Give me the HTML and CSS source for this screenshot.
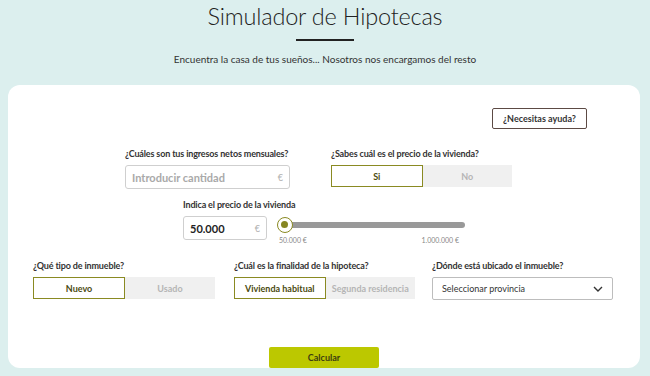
FILE: index.html
```html
<!DOCTYPE html>
<html lang="es">
<head>
    <meta charset="UTF-8">
    <meta name="viewport" content="width=device-width, initial-scale=1.0">
    <title>Simulador de Hipotecas</title>
    <link rel="stylesheet" href="styles.css">
</head>
<body>
    <header class="hero">
        <h1 class="hero-title">Simulador de Hipotecas</h1>
        <div class="hero-line"></div>
        <p class="hero-sub">Encuentra la casa de tus sueños... Nosotros nos encargamos del resto</p>
    </header>

    <main class="card">
        <div class="help-row">
            <button class="help-btn">¿Necesitas ayuda?</button>
        </div>

        <!-- ingresos y precio -->
        <div class="row row-first">
            <div class="field field-income">
                <label class="field-label">¿Cuáles son tus ingresos netos mensuales?</label>
                <div class="input-box">
                    <span class="placeholder">Introducir cantidad</span>
                    <span class="euro">€</span>
                </div>
            </div>
            <div class="field field-wide">
                <label class="field-label">¿Sabes cuál es el precio de la vivienda?</label>
                <div class="toggle">
                    <div class="toggle-opt active">Si</div>
                    <div class="toggle-opt">No</div>
                </div>
            </div>
        </div>

        <!-- slider del precio -->
        <div class="row row-price">
            <div class="field">
                <label class="field-label">Indica el precio de la vivienda</label>
                <div class="price-line">
                    <div class="input-box price-box">
                        <span class="value">50.000</span>
                        <span class="euro">€</span>
                    </div>
                    <div class="slider">
                        <div class="slider-track">
                            <div class="slider-thumb"></div>
                        </div>
                        <div class="slider-marks">
                            <span>50.000 €</span>
                            <span>1.000.000 €</span>
                        </div>
                    </div>
                </div>
            </div>
        </div>

        <!-- tipo, finalidad, provincia -->
        <div class="row row-third">
            <div class="field field-type">
                <label class="field-label">¿Qué tipo de inmueble?</label>
                <div class="toggle">
                    <div class="toggle-opt active">Nuevo</div>
                    <div class="toggle-opt">Usado</div>
                </div>
            </div>
            <div class="field field-wide field-goal">
                <label class="field-label">¿Cuál es la finalidad de la hipoteca?</label>
                <div class="toggle">
                    <div class="toggle-opt active">Vivienda habitual</div>
                    <div class="toggle-opt">Segunda residencia</div>
                </div>
            </div>
            <div class="field field-wide">
                <label class="field-label">¿Dónde está ubicado el inmueble?</label>
                <div class="select-box">
                    <span>Seleccionar provincia</span>
                    <svg class="chevron" width="10" height="6" viewBox="0 0 10 6">
                        <path d="M1 1 L5 5 L9 1" fill="none" stroke="#333" stroke-width="1.4"/>
                    </svg>
                </div>
            </div>
        </div>

        <div class="submit-row">
            <button class="calc-btn">Calcular</button>
        </div>
    </main>
</body>
</html>
```

FILE: styles.css
```css
* {
    margin: 0;
    padding: 0;
    box-sizing: border-box;
}

html, body {
    width: 100%;
    height: 100%;
    overflow: hidden;
}

body {
    background-color: #dcefee;
    font-family: Lato, 'Noto Sans', sans-serif;
    color: #333;
}

/* cabecera */
.hero {
    display: flex;
    flex-direction: column;
    align-items: center;
    padding-top: 1px;
}

.hero-title {
    font-weight: 300;
    font-size: 23.5px;
    line-height: 30px;
    color: #222;
    letter-spacing: -0.2px;
}

.hero-line {
    width: 58px;
    height: 2px;
    background-color: #222;
    margin-top: 8px;
}

.hero-sub {
    font-size: 10px;
    line-height: 14px;
    margin-top: 11px;
    color: #333;
}

/* tarjeta principal */
.card {
    background-color: white;
    margin: 19px 10px 0 8px;
    height: 283px;
    border-radius: 12px;
    display: flex;
    flex-direction: column;
}

.help-row {
    display: flex;
    justify-content: flex-end;
    padding: 23px 53px 0 0;
}

.help-btn {
    font-family: Lato, sans-serif;
    font-size: 9px;
    font-weight: 700;
    color: #333;
    background: white;
    border: 1px solid #5c4a44;
    border-radius: 2px;
    width: 95px;
    height: 21px;
}

.row {
    display: flex;
}

.row-first {
    padding-left: 117px;
    gap: 41px;
    margin-top: 19px;
}

.row-price {
    padding-left: 175px;
    margin-top: 10px;
}

.row-third {
    padding-left: 25px;
    gap: 17px;
    margin-top: 16px;
}

.field {
    display: flex;
    flex-direction: column;
}

.field-label {
    font-size: 9px;
    font-weight: 700;
    line-height: 12px;
    letter-spacing: -0.15px;
    color: #333;
    margin-bottom: 5px;
    white-space: nowrap;
}

.field-income {
    width: 165px;
}

.field-wide {
    width: 181px;
}

.field-type {
    width: 182px;
}

.field-goal {
    margin-left: 2px;
}

.input-box {
    height: 24px;
    border: 1px solid #cfcfcf;
    border-radius: 3px;
    display: flex;
    align-items: center;
    justify-content: space-between;
    padding: 0 6px;
}

.placeholder {
    font-size: 11px;
    font-weight: 700;
    color: #a9a9a9;
}

.euro {
    font-size: 9px;
    color: #b0b0b0;
}

.value {
    font-size: 11px;
    font-weight: 700;
    color: #222;
}

/* toggle de opciones */
.toggle {
    display: flex;
    height: 22px;
    background-color: #f0f0f0;
}

.toggle-opt {
    flex: 1;
    display: flex;
    align-items: center;
    justify-content: center;
    font-size: 9px;
    font-weight: 700;
    color: #b5b5b5;
}

.toggle-opt.active {
    background-color: white;
    border: 1.5px solid #8a8a22;
    color: #4a4a10;
}

/* precio con slider */
.price-line {
    display: flex;
    gap: 12px;
}

.price-box {
    width: 84px;
}

.slider {
    width: 186px;
    padding-top: 6px;
}

.slider-track {
    position: relative;
    height: 6px;
    margin-left: 4px;
    background-color: #999;
    border-radius: 3px;
}

.slider-thumb {
    position: absolute;
    left: -6px;
    top: -5px;
    width: 16px;
    height: 16px;
    border-radius: 50%;
    background-color: white;
    border: 1.5px solid #8a8a22;
}

.slider-thumb::after {
    content: '';
    position: absolute;
    left: 3px;
    top: 3px;
    width: 7px;
    height: 7px;
    border-radius: 50%;
    background-color: #868624;
}

.slider-marks {
    display: flex;
    justify-content: space-between;
    font-size: 7px;
    color: #888;
    margin-top: 8px;
    padding-right: 6px;
}

/* provincia */
.select-box {
    height: 23px;
    border: 1px solid #bdbdbd;
    border-radius: 2px;
    display: flex;
    align-items: center;
    justify-content: space-between;
    padding: 0 9px;
    font-size: 9px;
    color: #333;
}

.submit-row {
    display: flex;
    justify-content: center;
    margin-top: auto;
}

.calc-btn {
    font-family: Lato, sans-serif;
    width: 110px;
    height: 21px;
    background-color: #bcc800;
    border: none;
    border-radius: 2px;
    font-size: 9px;
    font-weight: 700;
    color: #3d3d10;
}
```
